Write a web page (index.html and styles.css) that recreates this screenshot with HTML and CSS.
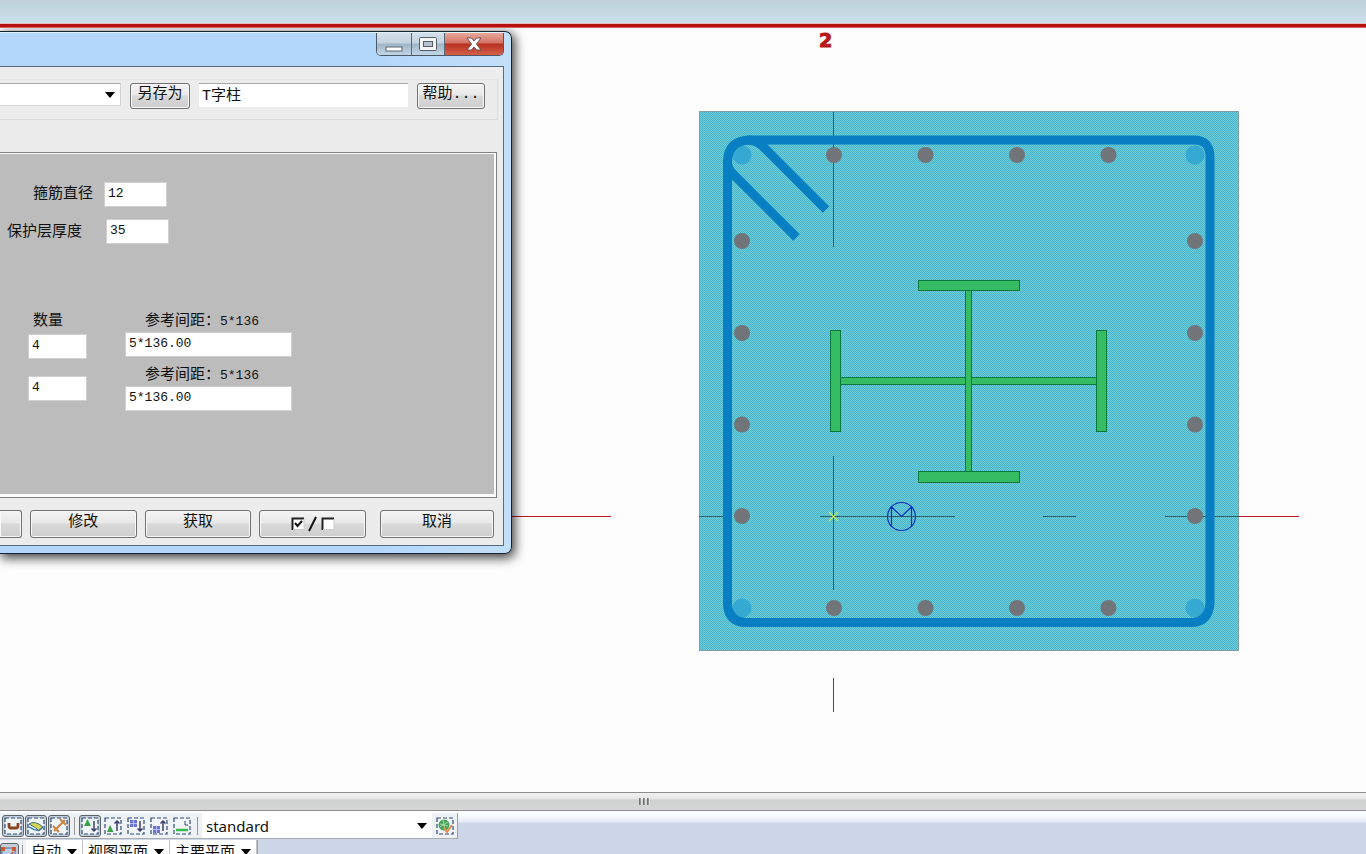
FILE: index.html
```html
<!DOCTYPE html>
<html lang="zh-CN">
<head>
<meta charset="utf-8">
<title>T字柱</title>
<link rel="stylesheet" href="styles.css">
</head>
<body>
<div class="topstrip"></div>
<main class="canvas">
  <svg class="drawing" role="img" aria-label="柱截面">
    <defs>
      <pattern id="hatch" width="2" height="2" patternUnits="userSpaceOnUse">
        <rect width="2" height="2" fill="#70ccd7"/>
        <rect width="1" height="1" fill="#46b4ca"/><rect x="1" y="1" width="1" height="1" fill="#46b4ca"/>
      </pattern>
    </defs>
    <g transform="translate(0,-28)">
      <text class="axis-no" x="819" y="47">2</text>
      <rect x="699.5" y="111.5" width="539" height="539" fill="url(#hatch)" stroke="#7f9fa4"/>
      <g fill="none" stroke="#235f70">
        <path d="M833.5 112V247M833.5 456V590M699 516.5H723M820 516.5H955M1043 516.5H1076M1165 516.5H1239"/>
      </g>
      <g fill="none" stroke="#b8181d">
        <path d="M833.5 678V712"/>
        <path d="M511 516.5H611"/>
        <path d="M1239 516.5H1299"/>
      </g>
      <g fill="#35a9d2"><circle cx="742" cy="155" r="9.5"/><circle cx="1195" cy="155" r="9.5"/><circle cx="742" cy="608" r="9.5"/><circle cx="1195" cy="608" r="9.5"/></g>
      <g fill="none" stroke="#077fc2" stroke-width="9">
        <path d="M749 140H1194Q1210 140 1210 157V604Q1208 622 1192 622.500H746Q729 622 727.500 605V162Q728 141 749 140Z"/>
        <path d="M747 140Q757 140 764 147.500L826 209.500M727.500 160Q727 168 733 174L796.500 237.500"/>
      </g>
      <g fill="#71757a">
        <circle cx="834" cy="155" r="8"/><circle cx="925.500" cy="155" r="8"/><circle cx="1017" cy="155" r="8"/><circle cx="1108.500" cy="155" r="8"/>
        <circle cx="834" cy="608" r="8"/><circle cx="925.500" cy="608" r="8"/><circle cx="1017" cy="608" r="8"/><circle cx="1108.500" cy="608" r="8"/>
        <circle cx="742" cy="241" r="8"/><circle cx="742" cy="333" r="8"/><circle cx="742" cy="424.500" r="8"/><circle cx="742" cy="516" r="8"/>
        <circle cx="1195" cy="241" r="8"/><circle cx="1195" cy="333" r="8"/><circle cx="1195" cy="424.500" r="8"/><circle cx="1195" cy="516" r="8"/>
      </g>
      <g fill="#36bd63" stroke="#08783f">
        <rect x="840.5" y="377.500" width="256" height="7"/>
        <rect x="965.5" y="290.500" width="6" height="181"/>
        <rect x="918.5" y="280.500" width="101" height="10"/>
        <rect x="918.5" y="471.500" width="101" height="11"/>
        <rect x="830.5" y="330.500" width="10" height="101"/>
        <rect x="1096.5" y="330.500" width="10" height="101"/>
      </g>
      <g fill="none" stroke="#0b2ec0" stroke-width="1.200"><circle cx="901.500" cy="516.500" r="14"/><path d="M891.500 527V507L901.500 516.500L911.500 507V527"/></g>
      <path d="M829 512L838 521M838 512L829 521" stroke="#c8f25a" stroke-width="1.200"/>
    </g>
  </svg>

  <section class="dialog" aria-label="T字柱">
    <header class="titlebar">
      <div class="winbuttons">
        <button class="wb wb-min" aria-label="最小化"><svg width="18" height="6"><rect x="1" y="1" width="16" height="4" fill="#fff" stroke="#5a6572"/></svg></button>
        <button class="wb wb-max" aria-label="最大化"><svg width="18" height="14"><rect x=".5" y=".5" width="17" height="13" rx="1" fill="#f4f4f4" stroke="#555e6b"/><rect x="4.500" y="4.500" width="9" height="5" fill="#b5c3cf" stroke="#555e6b"/></svg></button>
        <button class="wb wb-close" aria-label="关闭"><svg width="16" height="14"><path d="M1 1H5.500L8 4L10.500 1H15L10.500 7L15 13H10.500L8 10L5.500 13H1L5.500 7Z" fill="#fff" stroke="#6e5256"/></svg></button>
      </div>
    </header>
    <div class="client">
      <div class="savebar">
        <div class="combo combo-file"><select aria-label="属性文件"><option></option></select></div>
        <button class="btn btn-saveas">另存为</button>
        <input class="name" type="text" aria-label="名称" value="T字柱">
        <button class="btn btn-help">帮助...</button>
      </div>
      <div class="panel">
        <div class="field field-dia"><label for="dia">箍筋直径</label><input id="dia" value="12"></div>
        <div class="field field-cover"><label for="cover">保护层厚度</label><input id="cover" value="35"></div>
        <div class="rebar">
          <div class="count">
            <label for="n1">数量</label>
            <input id="n1" value="4">
            <input id="n2" value="4" aria-label="数量 2">
          </div>
          <div class="spacing">
            <label for="s1">参考间距：<span class="num">5*136</span></label>
            <input id="s1" value="5*136.00">
            <label for="s2">参考间距：<span class="num">5*136</span></label>
            <input id="s2" value="5*136.00">
          </div>
        </div>
      </div>
      <footer class="actions">
        <button class="btn btn-cut" aria-label="应用"></button>
        <button class="btn">修改</button>
        <button class="btn">获取</button>
        <button class="btn" aria-label="全选或全不选"><svg width="44" height="16"><rect x="1" y="2" width="12" height="12" fill="#fff"/><path d="M1.500 14V2.500H13" fill="none" stroke="#222" stroke-width="2"/><path d="M13 3V13.500H2" fill="none" stroke="#ccc"/><path d="M4 7L6.500 10L11 5" fill="none" stroke="#111" stroke-width="2"/><path d="M18 15L25 1" stroke="#111" stroke-width="2"/><rect x="31" y="2" width="12" height="12" fill="#fff"/><path d="M31.500 14V2.500H43" fill="none" stroke="#222" stroke-width="2"/><path d="M43 3V13.500H32" fill="none" stroke="#ccc"/></svg></button>
        <button class="btn btn-cancel">取消</button>
      </footer>
    </div>
  </section>
</main>
<div class="splitter"><svg width="12" height="10"><path d="M2 1V8M6 1V8M10 1V8" stroke="#555" stroke-width="1.500"/><path d="M3 1V8M7 1V8M11 1V8" stroke="#fff" stroke-width=".5"/></svg></div>
<div class="dock">
  <svg width="0" height="0" class="defs"><defs>
    <g id="box"><rect x="1" y="1" width="16" height="16" fill="#f1f5fa" stroke="#2a4b78" stroke-width="1.200" stroke-dasharray="4 2"/></g>
    <g id="up"><path d="M13 14V4M10.500 6.500L13 4L15.500 6.500" fill="none" stroke="#3b3f6c" stroke-width="1.500"/></g>
    <g id="down"><path d="M13 4V14M10.500 11.500L13 14L15.500 11.500" fill="none" stroke="#3b3f6c" stroke-width="1.500"/></g>
    <g id="grid"><rect width="7" height="7" fill="#6d74d2"/><path d="M0 3.500H7M3.500 0V7" stroke="#c8ccf4" stroke-width=".8"/></g>
  </defs></svg>
  <div class="bar bar-one">
    <button class="tool on" aria-label="选择钢筋"><svg width="18" height="18"><use href="#box"/><path d="M5 6V9Q5 11 7 11H12Q14 11 14 9V6" fill="none" stroke="#8a4422" stroke-width="2.800"/></svg></button>
    <button class="tool on" aria-label="选择面"><svg width="18" height="18"><use href="#box"/><path d="M2 7Q8 3 16 10L12 14Q10 11 2 7Z" fill="#d8d34c" stroke="#3d7196"/><path d="M2 10Q6 13 12 13.500L16 10" fill="none" stroke="#3579aa" stroke-width="1.500"/></svg></button>
    <button class="tool on" aria-label="选择距离"><svg width="18" height="18"><use href="#box"/><path d="M4 14L15 3M3 9L9 15M10 2L16 8" fill="none" stroke="#c98746" stroke-width="2.200"/></svg></button>
    <i class="sep"></i>
    <button class="tool on" aria-label="选择组件"><svg width="18" height="18"><use href="#box"/><path d="M6.500 2L10 9H3Z" fill="#38a046"/><use href="#down"/></svg></button>
    <button class="tool" aria-label="选择组件中的对象"><svg width="18" height="18"><use href="#box"/><path d="M6 8L9.500 15H3Z" fill="#38a046"/><use href="#up"/></svg></button>
    <button class="tool" aria-label="选择构件"><svg width="18" height="18"><use href="#box"/><use href="#grid" x="3" y="3"/><use href="#down"/></svg></button>
    <button class="tool" aria-label="选择构件中的对象"><svg width="18" height="18"><use href="#box"/><use href="#grid" x="3" y="9"/><use href="#up"/></svg></button>
    <button class="tool" aria-label="选择轴线"><svg width="18" height="18"><use href="#box"/><path d="M3 13H15" stroke="#36bd48" stroke-width="2.500"/><path d="M12 4V8H15" fill="none" stroke="#3b4a6c"/></svg></button>
    <i class="sep"></i>
    <div class="combo combo-filter"><select aria-label="选择过滤"><option>standard</option></select></div>
    <button class="tool tool-filter" aria-label="过滤设置"><svg width="18" height="18"><use href="#box"/><circle cx="8" cy="8" r="5.500" fill="#48a55b"/><path d="M4 7L12 9M7 3L9 13M4 10L12 5" stroke="#b6dfb0" stroke-width=".8"/><path d="M8 11L11 15L16 8" fill="none" stroke="#e58a4c" stroke-width="2"/></svg></button>
  </div>
  <div class="bar bar-two">
    <button class="tool on snap" aria-label="捕捉"><svg width="18" height="18"><rect x="1" y="3" width="13" height="14" fill="#b9cde4" stroke="#4571a0"/><path d="M6 17L12 7" stroke="#c7693d" stroke-width="2"/><rect x="0" y="2" width="4" height="4" fill="#d35b31"/><rect x="11" y="2" width="4" height="4" fill="#d35b31"/></svg></button>
    <i class="sep"></i>
    <div class="combo combo-auto"><select aria-label="平面类型"><option>自动</option></select></div>
    <div class="combo combo-plane"><select aria-label="视图平面"><option>视图平面</option></select></div>
    <div class="combo combo-plane"><select aria-label="主要平面"><option>主要平面</option></select></div>
  </div>
</div>
</body>
</html>
```
FILE: styles.css
```css
* { box-sizing: border-box; }
html, body { height: 100%; }
body {
  margin: 0;
  display: flex;
  flex-direction: column;
  overflow: hidden;
  background: #fdfdfd;
  color: #111;
  font: 15px/20px "Liberation Mono", "Noto Sans CJK SC", monospace;
}
button, input, select { font: inherit; color: inherit; margin: 0; padding: 0; border: 0; border-radius: 0; }
svg { display: block; flex: none; }

.topstrip {
  flex: none;
  height: 28px;
  background: linear-gradient(#bfd0d9, #cbdfeb 23px, #e9b8b8 23px, #e9b8b8 24px, #b5120f 24px, #b5120f 27px, #d8625e 27px);
}
.canvas { position: relative; flex: 1; min-height: 0; overflow: hidden; }
.drawing { width: 100%; height: 100%; }
.axis-no { font: bold 19px "DejaVu Sans", sans-serif; fill: #b8181a; stroke: #b8181a; stroke-width: 1px; }

/* Dialog window */
.dialog {
  position: absolute;
  left: 0;
  top: 3px;
  width: 512px;
  padding-right: 7px;
  padding-bottom: 7px;
  background: linear-gradient(90deg, #b3d7fb, #b3d7fb 380px, #c3dff8);
  border: 1px solid #17222c;
  border-left: 0;
  border-radius: 0 7px 7px 0;
  box-shadow: 2px 3px 11px 1px rgba(0, 0, 0, .75);
}
.titlebar { height: 34px; display: flex; justify-content: flex-end; border-top: 1px solid #e3f2ff; }
.winbuttons {
  display: flex;
  height: 23px;
  border: 1px solid #4b5967;
  border-top: 0;
  border-radius: 0 0 5px 5px;
  overflow: hidden;
}
.wb { display: flex; align-items: center; justify-content: center; background: linear-gradient(#d4e0ea, #c4d3df 45%, #9fb5c7 50%, #c2d5e6); border-right: 1px solid #5b6976; }
.wb-min { width: 35px; padding-top: 9px; }
.wb-max { width: 33px; }
.wb-close { width: 58px; border-right: 0; background: linear-gradient(#e6a79b, #d47566 45%, #b8301e 50%, #d4604a); }
.client { background: #ececec; border: 1px solid #536b86; border-left: 0; }

.btn {
  display: flex;
  align-items: center;
  justify-content: center;
  background: linear-gradient(#f3f3f3, #e9e9e9 45%, #d9d9d9 50%, #cecece);
  border: 1px solid #707070;
  border-radius: 3px;
  box-shadow: inset 0 0 0 1px #f8f8f8;
  padding-bottom: 2px;
}
.savebar {
  display: flex;
  align-items: flex-start;
  margin: 12px 5px 0 0;
  padding: 3px 12px 10px 0;
  border: 1px solid #dadada;
  border-left: 0;
  border-top-color: #e6e6e6;
}
.savebar .btn { height: 26px; }
.btn-saveas { width: 60px; margin: 0 9px; }
.name { flex: 1; min-width: 0; height: 24px; padding: 0 3px 4px; background: #fff; border-top: 1px solid #aaa; }
.btn-help { width: 68px; margin-left: 9px; }

.combo { position: relative; background: #fff; }
.combo select { appearance: none; width: 100%; height: 100%; background: transparent; outline: 0; }
.combo::after {
  content: "";
  position: absolute;
  right: 5px;
  top: 9px;
  border: 5px solid transparent;
  border-top: 6px solid #000;
  border-bottom: 0;
  pointer-events: none;
}
.combo-file { width: 121px; height: 23px; border: 1px solid #d4d4d4; border-top-color: #aaa; border-left: 0; }
.combo-file::after { top: 8px; }

.panel {
  margin: 32px 6px 0 0;
  height: 346px;
  padding: 29px 0 0;
  background: #bcbcbc;
  border: 1px solid #808080;
  border-left: 0;
  box-shadow: inset -2px -3px 0 #fcfcfc, inset 0 1px 0 #fcfcfc;
}
.panel input { display: block; height: 25px; padding: 0 3px 3px; background: #fff; border: 1px solid #d0d0d0; font-size: 13px; }
.panel label { display: block; }
.num { font-size: 13px; }
.field { display: flex; }
.field label { padding-top: 3px; }
.field input { width: 63px; }
.field-dia { padding-left: 33px; gap: 11px; }
.field-cover { padding-left: 7px; gap: 24px; margin-top: 12px; }
.field-cover label { padding-top: 4px; }
.rebar { display: flex; gap: 38px; padding: 68px 0 0 28px; }
.count { display: flex; flex-direction: column; width: 59px; }
.count label { padding-left: 5px; margin-bottom: 2px; }
.count input { width: 100%; margin-bottom: 17px; }
.spacing { width: 167px; }
.spacing label { padding-left: 20px; }
.spacing input { width: 100%; margin-bottom: 9px; }

.actions { display: flex; gap: 8px; padding: 12px 9px 7px 0; }
.actions .btn { flex: 1; height: 28px; }
.actions .btn svg { margin-top: 1px; }
.actions .btn-cut { flex: none; width: 22px; border-left: 0; border-radius: 0 3px 3px 0; }
.actions .btn-cancel { flex: none; width: 114px; margin-left: 6px; }

/* Bottom area */
.splitter {
  flex: none;
  height: 19px;
  display: flex;
  justify-content: center;
  align-items: center;
  padding-right: 78px;
  background: linear-gradient(#f0f0f0, #e6e6e6 35%, #cfd0d0 40%, #d6d6d6);
  border-top: 1px solid #8d8d8d;
  border-bottom: 1px solid #8d8d8d;
}
.dock {
  flex: none;
  height: 43px;
  overflow: hidden;
  padding-top: 2px;
  background: linear-gradient(#fff, #f5f8fc 6px, #e3eaf4 11px, #cdd7e7 12px);
}
.defs { position: absolute; }
.bar { display: flex; align-items: center; width: max-content; background: #eef2f5; border-right: 1px solid #a0a0a0; border-bottom: 1px solid #a9adb0; }
.bar-one { height: 26px; padding-left: 2px; gap: 1px; }
.tool { width: 22px; height: 22px; display: flex; align-items: center; justify-content: center; background: transparent; }
.tool.on { background: #c3ced8; border: 1px solid #5d6469; border-radius: 3px; }
.sep { width: 1px; height: 18px; margin: 0 3px; background: #999; }
.combo-filter { width: 230px; height: 25px; font: 15px/24px "Noto Sans", sans-serif; }
.combo-filter select { padding-left: 4px; }
.combo-filter::after { top: 10px; }
.tool-filter { width: 24px; }
.bar-two { height: 28px; margin-top: 1px; }
.bar-two .combo { height: 28px; border-right: 1px solid #c4c4c4; }
.bar-two .combo::after { top: 9px; }
.snap { width: 19px; border-left: 0; }
.combo-auto { width: 57px; }
.combo-auto select, .combo-plane select { padding-left: 5px; }
.combo-plane { width: 87px; }
```
